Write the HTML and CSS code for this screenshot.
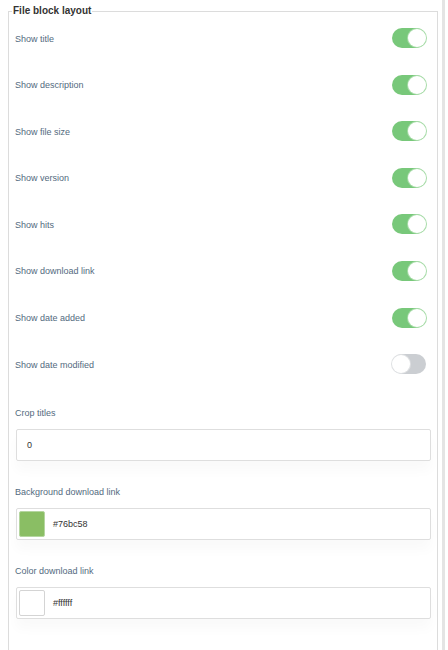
FILE: index.html
```html
<!DOCTYPE html>
<html>
<head>
<meta charset="utf-8">
<link rel="stylesheet" href="styles.css">
</head>
<body>
<div class="page">
  <fieldset class="panel">
    <legend class="legend">File block layout</legend>
    <div class="row"><span class="label">Show title</span><span class="toggle on"></span></div>
    <div class="row"><span class="label">Show description</span><span class="toggle on"></span></div>
    <div class="row"><span class="label">Show file size</span><span class="toggle on"></span></div>
    <div class="row"><span class="label">Show version</span><span class="toggle on"></span></div>
    <div class="row"><span class="label">Show hits</span><span class="toggle on"></span></div>
    <div class="row"><span class="label">Show download link</span><span class="toggle on"></span></div>
    <div class="row"><span class="label">Show date added</span><span class="toggle on"></span></div>
    <div class="row"><span class="label">Show date modified</span><span class="toggle off"></span></div>

    <div class="group first">
      <div class="label glabel">Crop titles</div>
      <div class="input"><span class="value plain">0</span></div>
    </div>
    <div class="group">
      <div class="label glabel">Background download link</div>
      <div class="input"><span class="swatch green"></span><span class="value">#76bc58</span></div>
    </div>
    <div class="group">
      <div class="label glabel">Color download link</div>
      <div class="input"><span class="swatch white"></span><span class="value">#ffffff</span></div>
    </div>
  </fieldset>
  <div class="edge"></div>
</div>
</body>
</html>
```
FILE: styles.css
```css
* { box-sizing: border-box; }
html, body { margin: 0; padding: 0; background: #fff; }
body { font-family: "Liberation Sans", Arial, sans-serif; }
.page {
  display: flex;
  height: 650px;
  overflow: hidden;
}
.panel {
  margin: 5px 0 0 8px;
  width: 430px;
  min-height: 700px;
  border: 1px solid #dcdcdc;
  border-bottom: none;
  padding: 0 6px 0 6px;
  flex: none;
}
.legend {
  font-size: 10px;
  line-height: 12px;
  font-weight: bold;
  color: #333;
  padding: 0 1px;
  margin-left: -3px;
}
.row {
  display: flex;
  align-items: center;
  justify-content: space-between;
  height: 20px;
  margin-bottom: 26.6px;
  padding-right: 5px;
}
.row:first-of-type { margin-top: 11px; }
.label {
  font-size: 9px;
  line-height: 11px;
  color: #536a7e;
  padding-top: 2px;
}
.toggle {
  position: relative;
  width: 34px;
  height: 20px;
  border-radius: 10px;
  flex: none;
}
.toggle::after {
  content: "";
  position: absolute;
  top: 1px;
  width: 18px;
  height: 18px;
  border-radius: 50%;
  background: #fff;
}
.toggle.on { background: #78c87a; }
.toggle.on::after { right: 0; box-shadow: 0 0 0 1px #a8dca9; }
.toggle.off { background: #cbced2; }
.toggle.off::after { left: 0; box-shadow: 0 0 0 1px #dfe1e3; }
.group { margin-top: 24px; }
.group.first { margin-top: 31.6px; }
.input {
  margin: 10px 0 0 1px;
  height: 32px;
  border: 1px solid #dedede;
  border-radius: 2px;
  display: flex;
  align-items: center;
  padding-left: 2px;
  box-shadow: 0 10px 12px rgba(0, 0, 0, 0.025);
}
.value {
  font-size: 9px;
  color: #333;
  margin-left: 8px;
}
.value.plain { margin-left: 8px; }
.swatch {
  width: 26px;
  height: 26px;
  border: 1px solid #d4d4d4;
  border-radius: 2px;
  flex: none;
}
.swatch.green { background: #8abe64; border-color: #b5d6a0; }
.swatch.white { background: #fff; }
.edge {
  width: 3px;
  margin-left: 4px;
  background: #e4e4e4;
  flex: none;
}
```
